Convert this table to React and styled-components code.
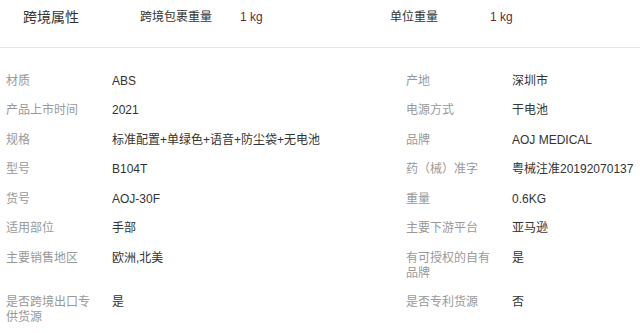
import React from "react";
import styled, { createGlobalStyle } from "styled-components";

const GlobalStyle = createGlobalStyle`
	body {
		margin: 0;
		background: #fff;
		font-family: "Liberation Sans", "Noto Sans CJK SC", sans-serif;
	}
`;

const summary = [
	{ label: "跨境包裹重量", value: "1 kg" },
	{ label: "单位重量", value: "1 kg" },
];

const attrs = [
	["材质", "ABS"],
	["产地", "深圳市"],
	["产品上市时间", "2021"],
	["电源方式", "干电池"],
	["规格", "标准配置+单绿色+语音+防尘袋+无电池"],
	["品牌", "AOJ MEDICAL"],
	["型号", "B104T"],
	["药（械）准字", "粤械注准20192070137"],
	["货号", "AOJ-30F"],
	["重量", "0.6KG"],
	["适用部位", "手部"],
	["主要下游平台", "亚马逊"],
	["主要销售地区", "欧洲,北美"],
	["有可授权的自有品牌", "是"],
	["是否跨境出口专供货源", "是"],
	["是否专利货源", "否"],
];

function App() {
	return (
		<>
			<GlobalStyle />
			<Page>
				<Header>
					<Title>跨境属性</Title>
					{summary.map((s) => (
						<Field key={s.label}>
							<FieldLabel>{s.label}</FieldLabel>
							<FieldValue>{s.value}</FieldValue>
						</Field>
					))}
				</Header>
				<Grid>
					{attrs.map(([label, value]) => (
						<Cell key={label}>
							<Label>{label}</Label>
							<Value>{value}</Value>
						</Cell>
					))}
				</Grid>
			</Page>
		</>
	);
}

const Page = styled.div`
	width: 640px;
	height: 333px;
	overflow: hidden;
	background: #fff;
`;

const Header = styled.div`
	display: flex;
	align-items: flex-start;
	height: 48px;
	padding-top: 8px;
	box-sizing: border-box;
	border-bottom: 1px solid #e6e6e6;
`;

/* 23px indent + 120px column puts the first field at x=143 */
const Title = styled.div`
	width: 120px;
	padding-left: 23px;
	font-size: 14px;
	line-height: 19px;
	color: #333;
`;

const Field = styled.div`
	display: flex;
	font-size: 12px;
	line-height: 18px;
`;

const FieldLabel = styled.div`
	width: 100px;
	color: #333;
`;

const FieldValue = styled.div`
	width: 150px;
	color: #6b2737;
`;

const Grid = styled.div`
	display: grid;
	grid-template-columns: 400px 1fr;
	padding-top: 18.5px;
`;

const Cell = styled.div`
	display: flex;
	align-items: flex-start;
	gap: 16px;
	padding: 7.25px 0 7.25px 6px;
	font-size: 12px;
	line-height: 15px;
`;

const Label = styled.div`
	width: 90px;
	flex-shrink: 0;
	color: #999;
`;

const Value = styled.div`
	color: #333;
	white-space: nowrap;
`;

export default App;
